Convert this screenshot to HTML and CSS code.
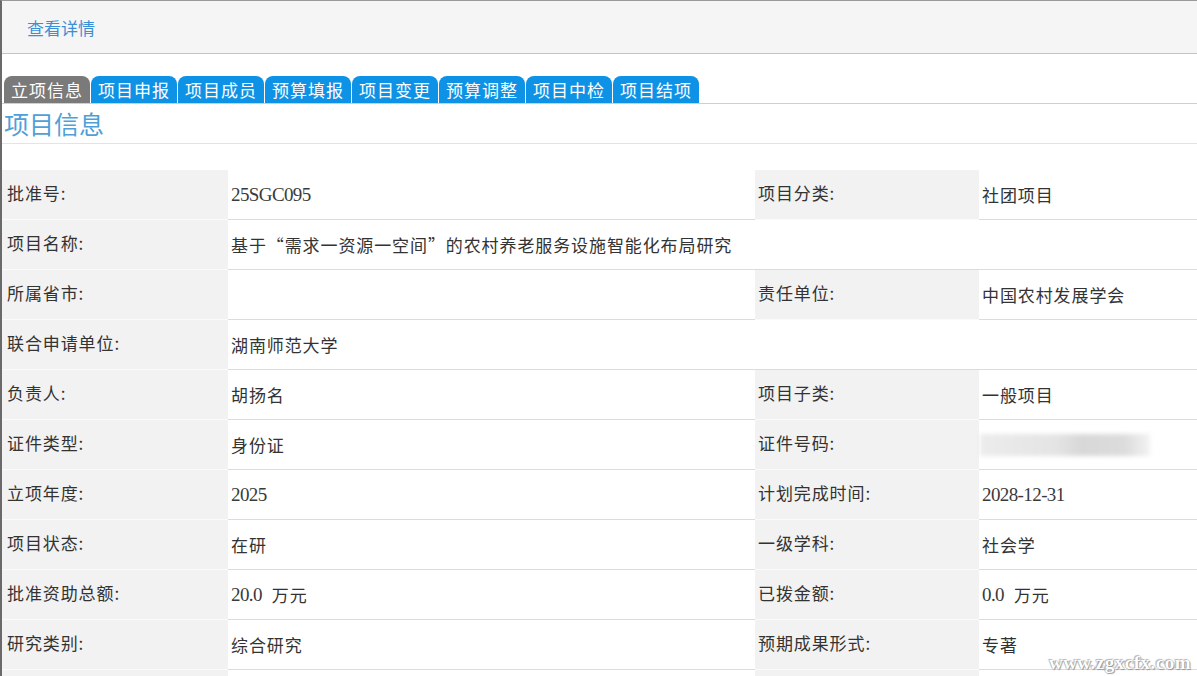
FILE: index.html
```html
<!DOCTYPE html>
<html lang="zh-CN">
<head>
<meta charset="utf-8">
<title>查看详情</title>
<link rel="stylesheet" href="styles.css">
</head>
<body>
<div class="frame">
  <div class="topbar"><a class="toplink">查看详情</a></div>
  <div class="tabs">
    <div class="tab active">立项信息</div>
    <div class="tab">项目申报</div>
    <div class="tab">项目成员</div>
    <div class="tab">预算填报</div>
    <div class="tab">项目变更</div>
    <div class="tab">预算调整</div>
    <div class="tab">项目中检</div>
    <div class="tab">项目结项</div>
  </div>
  <div class="title">项目信息</div>
  <div class="grid">
    <div class="lab first">批准号:</div>
    <div class="val"><span class="num">25SGC095</span></div>
    <div class="lab">项目分类:</div>
    <div class="val">社团项目</div>

    <div class="lab first">项目名称:</div>
    <div class="val span3">基于“需求一资源一空间”的农村养老服务设施智能化布局研究</div>

    <div class="lab first">所属省市:</div>
    <div class="val"></div>
    <div class="lab">责任单位:</div>
    <div class="val">中国农村发展学会</div>

    <div class="lab first">联合申请单位:</div>
    <div class="val span3">湖南师范大学</div>

    <div class="lab first">负责人:</div>
    <div class="val">胡扬名</div>
    <div class="lab">项目子类:</div>
    <div class="val">一般项目</div>

    <div class="lab first">证件类型:</div>
    <div class="val">身份证</div>
    <div class="lab">证件号码:</div>
    <div class="val"><span class="blurred"></span><span class="tail">1</span></div>

    <div class="lab first">立项年度:</div>
    <div class="val"><span class="num">2025</span></div>
    <div class="lab">计划完成时间:</div>
    <div class="val"><span class="num">2028-12-31</span></div>

    <div class="lab first">项目状态:</div>
    <div class="val">在研</div>
    <div class="lab">一级学科:</div>
    <div class="val">社会学</div>

    <div class="lab first">批准资助总额:</div>
    <div class="val"><span class="num amt">20.0</span>万元</div>
    <div class="lab">已拨金额:</div>
    <div class="val"><span class="num amt">0.0</span>万元</div>

    <div class="lab first">研究类别:</div>
    <div class="val">综合研究</div>
    <div class="lab">预期成果形式:</div>
    <div class="val">专著</div>

    <div class="lab first"></div>
    <div class="val"></div>
    <div class="lab"></div>
    <div class="val"></div>
  </div>
  <div class="watermark">www.zgxcfx.com</div>
</div>
</body>
</html>
```

FILE: styles.css
```css
html, body {
  margin: 0;
  padding: 0;
  background: #ffffff;
  overflow: hidden;
}

body {
  font-family: "Noto Sans CJK SC", "Noto Sans", sans-serif;
  color: #333333;
}

.frame {
  position: relative;
  height: 676px;
  border-left: 2px solid #6a6a6a;
  border-top: 1px solid #9a9a9a;
  box-sizing: border-box;
  overflow: hidden;
}

.topbar {
  height: 52px;
  background: #f5f5f5;
  border-bottom: 1px solid #c4c4c4;
  display: flex;
  align-items: center;
  padding-left: 25px;
}

.toplink {
  color: #3a8fd6;
  font-size: 17px;
  cursor: pointer;
}

.tabs {
  display: flex;
  gap: 1px;
  margin-top: 22px;
  padding-left: 2px;
  border-bottom: 1px solid #cfcfcf;
}

.tab {
  width: 86px;
  height: 27px;
  line-height: 27px;
  text-align: center;
  background: #0d92e6;
  color: #ffffff;
  font-size: 17px;
  letter-spacing: 1px;
  border-radius: 8px 8px 0 0;
}

.tab.active {
  background: #7a7a7a;
}

.title {
  height: 39px;
  line-height: 39px;
  padding-left: 2px;
  font-size: 25px;
  color: #4f9fd8;
  border-bottom: 1px solid #e4e4e4;
}

.grid {
  display: grid;
  grid-template-columns: 226px 527px 224px 1fr;
  grid-auto-rows: 50px;
  margin-top: 26px;
}

.lab, .val {
  display: flex;
  align-items: center;
  font-size: 17px;
  letter-spacing: 0.9px;
  box-sizing: border-box;
  white-space: nowrap;
}

.lab {
  background: #f2f2f2;
  border-bottom: 1px solid #fafafa;
  padding: 0 0 5px 3px;
}

.lab.first {
  padding-left: 5px;
}

.val {
  background: #ffffff;
  border-bottom: 1px solid #dcdcdc;
  padding-left: 3px;
}

.span3 {
  grid-column: span 3;
}

.num {
  font-family: "Liberation Serif", "Noto Sans CJK SC", serif;
  font-size: 19px;
  letter-spacing: -0.6px;
  color: #3a3a3a;
}

.num.amt {
  margin-right: 10px;
}

.blurred {
  display: block;
  width: 170px;
  height: 22px;
  margin-left: -2px;
  background: linear-gradient(90deg, #ececec 0%, #e4e4e4 45%, #d8d8d8 60%, #dcdcdc 85%, #f3f3f3 100%);
  filter: blur(2px);
}

.tail {
  font-family: "Liberation Serif", serif;
  font-size: 12px;
  color: #888888;
  margin: 6px 0 0 -14px;
}

.watermark {
  position: absolute;
  right: 6px;
  bottom: 2px;
  font-family: "Liberation Serif", serif;
  font-weight: bold;
  font-size: 19px;
  color: #ffffff;
  text-shadow: 0 0 1px #888, 1px 1px 1px #999, -1px -1px 1px #bbb;
  letter-spacing: 0.5px;
}
```
